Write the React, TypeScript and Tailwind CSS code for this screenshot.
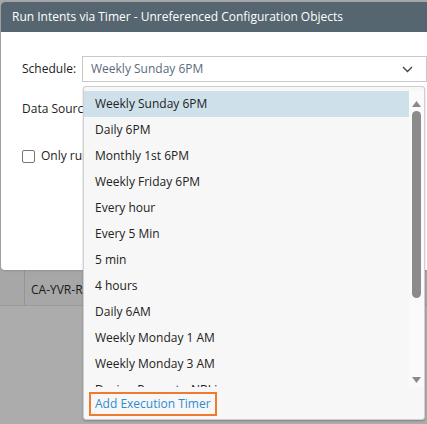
import React from "react"

const options = [
  "Weekly Sunday 6PM",
  "Daily 6PM",
  "Monthly 1st 6PM",
  "Weekly Friday 6PM",
  "Every hour",
  "Every 5 Min",
  "5 min",
  "4 hours",
  "Daily 6AM",
  "Weekly Monday 1 AM",
  "Weekly Monday 3 AM",
  "Device_Property_NBLive",
]

const App = () => {
  const selected = "Weekly Sunday 6PM"

  return (
    <div
      className="relative h-[424px] w-[427px] overflow-hidden bg-[#a7a7a7] text-[12px]"
      style={{ fontFamily: '"Open Sans", "Noto Sans", sans-serif' }}
    >
      {/* page behind the backdrop */}
      <div className="pt-[270px]">
        <div className="flex h-[36px] border-b border-[#9a9a9a]">
          <div className="w-[25px] border-r border-[#959595]" />
          <div className="flex items-center pl-[6px] pt-[4px] text-[#1a1a1a]">CA-YVR-R1</div>
        </div>
        <div className="h-[120px] bg-[#acacac]" />
      </div>

      {/* modal */}
      <div className="absolute left-[1px] top-[2px] h-[268px] w-[440px] overflow-hidden rounded-[4px] bg-white shadow">
        <div className="flex h-[30px] items-center bg-[#566670] pl-[11px] text-[12px] text-white">
          Run Intents via Timer - Unreferenced Configuration Objects
        </div>

        <div className="pl-[21px] pt-[24px] text-[#222]">
          <div className="flex items-center">
            <span className="w-[60px]">Schedule:</span>
            <div className="flex h-[26px] w-[345px] items-center justify-between border border-[#c8c8c8] pl-[8px] pr-[8px] text-[#5b6b7c]">
              <span>{selected}</span>
              <svg width="11" height="7" viewBox="0 0 11 7" className="mr-[5px]">
                <path d="M1 1l4.5 4.5L10 1" fill="none" stroke="#444" strokeWidth="1.4" />
              </svg>
            </div>
          </div>

          <div className="mt-[18px] flex items-center">
            <span>Data Source</span>
          </div>

          <div className="mt-[29px] flex items-center gap-[6px]">
            <span className="h-[13px] w-[13px] rounded-[2px] border border-[#777]" />
            <span>Only run</span>
          </div>
        </div>
      </div>

      {/* dropdown */}
      <div className="absolute left-[83px] top-[86px] flex h-[334px] w-[342px] flex-col rounded-[3px] border border-[#cfcfcf] bg-[#f7f7f7] shadow-[0_1px_2px_rgba(0,0,0,0.25)]">
        <div className="flex h-[300px] pt-[4px]">
          <div className="flex-1 overflow-hidden">
            {options.map((o) => (
              <div
                key={o}
                className={`flex h-[26px] items-center pl-[11px] text-[#222] ${
                  o === selected ? "bg-[#cee1eb]" : ""
                }`}
              >
                {o}
              </div>
            ))}
          </div>
          <div className="flex w-[15px] flex-col items-center bg-[#fafafa] pt-[10px]">
            <svg width="9" height="6" viewBox="0 0 9 6">
              <path d="M4.5 0L9 6H0z" fill="#8a8a8a" />
            </svg>
            <div className="mt-[4px] h-[187px] w-[9px] rounded-full bg-[#8b8b8b]" />
            <div className="flex-1" />
            <svg width="9" height="6" viewBox="0 0 9 6" className="mb-[4px]">
              <path d="M0 0h9L4.5 6z" fill="#8a8a8a" />
            </svg>
          </div>
        </div>
        <div className="pl-[5px] pt-[5px]">
          <span className="inline-flex h-[24px] items-center border-2 border-[#f07b2f] px-[4px] text-[#2f8bd0]">
            Add Execution Timer
          </span>
        </div>
      </div>
    </div>
  )
}

export default App
